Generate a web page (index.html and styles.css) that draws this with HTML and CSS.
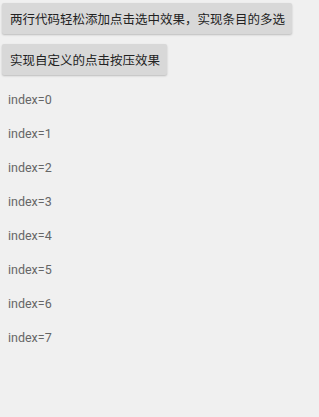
FILE: index.html
```html
<!DOCTYPE html>
<html lang="zh">
  <head>
    <meta charset="UTF-8" />
    <meta name="viewport" content="width=device-width, initial-scale=1.0" />
    <title>Select</title>
    <link rel="stylesheet" href="styles.css">
  </head>
  <body>
    <div class="page">
      <button class="btn">两行代码轻松添加点击选中效果，实现条目的多选</button>
      <button class="btn">实现自定义的点击按压效果</button>

      <ul class="list">
        <li>index=0</li>
        <li>index=1</li>
        <li>index=2</li>
        <li>index=3</li>
        <li>index=4</li>
        <li>index=5</li>
        <li>index=6</li>
        <li>index=7</li>
      </ul>
    </div>
  </body>
</html>
```

FILE: styles.css
```css
html,
body {
  margin: 0;
  height: 100%;
  background-color: #f0f0f0;
}

.page {
  display: flex;
  flex-direction: column;
  align-items: flex-start;
  padding: 3px 2px 0 2px;
}

.btn {
  height: 31px;
  padding: 0 7px 0 8px;
  margin-bottom: 10px;
  border: none;
  border-radius: 2px;
  background-color: #d8d8d8;
  box-shadow: 0 1px 2px rgba(0, 0, 0, 0.22);
  color: #222;
  font-family: "Noto Sans CJK SC", "Liberation Sans", sans-serif;
  font-size: 12.5px;
}

.list {
  list-style: none;
  margin: 0;
  padding: 0;
  margin-top: -2px;
}

.list li {
  height: 34px;
  line-height: 34px;
  padding-left: 6px;
  color: #666;
  font-family: Roboto, "Liberation Sans", sans-serif;
  font-size: 12.5px;
}
```
